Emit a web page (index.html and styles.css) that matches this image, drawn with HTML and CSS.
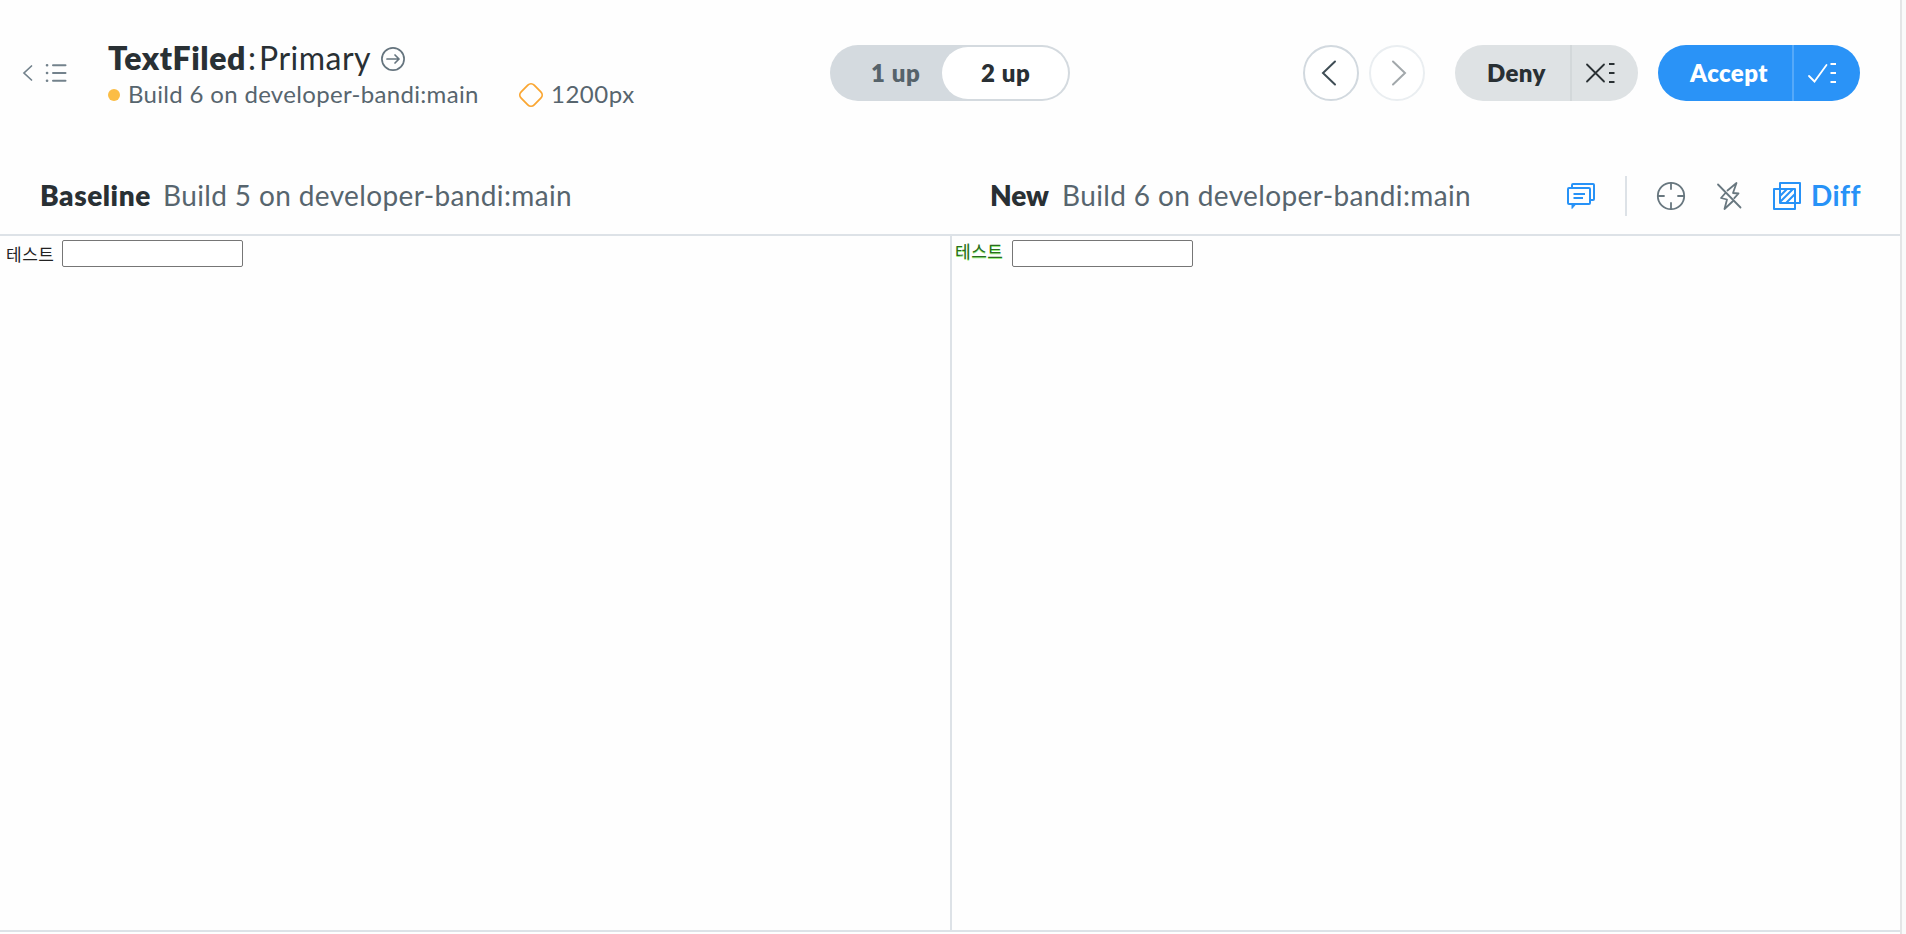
FILE: index.html
```
<!DOCTYPE html>
<html lang="en">
<head>
<meta charset="utf-8">
<title>TextFiled: Primary</title>
<link rel="stylesheet" href="styles.css">
</head>
<body>
<main class="app">
  <header class="topbar">
    <a class="back">
      <svg width="46" height="22" viewBox="0 0 46 22" fill="none" stroke="#73828c" stroke-width="1.7" stroke-linecap="round"><path d="M9.5 4 2 11l7.500 7"/><path d="M31 3.200h12.500M31 11h12.500M31 18.700h12.500" stroke-width="2"/><path d="M25 3.200h.1M25 11h.1M25 18.700h.1" stroke-width="2.600"/></svg>
    </a>
    <div class="heading">
      <h1 class="title"><b class="component">TextFiled</b><span class="colon">:</span><span class="story">Primary</span>
        <svg class="go" width="24" height="24" viewBox="0 0 24 24" fill="none" stroke="#65747e" stroke-width="1.700" stroke-linecap="round" stroke-linejoin="round"><circle cx="12" cy="12" r="11.100"/><path d="M6 12h12M14 8l4 4-4 4"/></svg>
      </h1>
      <div class="meta">
        <i class="dot"></i><span class="build">Build 6 on developer-bandi:main</span>
        <svg class="diamond" width="26" height="26" viewBox="0 0 26 26" fill="none" stroke="#faa632" stroke-width="1.800"><rect x="3.800" y="3.800" width="18.400" height="18.400" rx="4.500" transform="rotate(45 13 13)"/></svg>
        <span class="viewport">1200px</span>
      </div>
    </div>
    <div class="switch"><span class="option one">1 up</span><span class="option two">2 up</span></div>
    <nav class="actions">
      <button class="round"><svg width="16" height="28" viewBox="0 0 16 28" fill="none" stroke="#3f4d55" stroke-width="2" stroke-linecap="round"><path d="M14 2.500 2 14l12 11.500"/></svg></button>
      <button class="round disabled"><svg width="16" height="28" viewBox="0 0 16 28" fill="none" stroke="#a2a8ab" stroke-width="2" stroke-linecap="round"><path d="m2 2.500 12 11.500L2 25.500"/></svg></button>
      <div class="split deny"><span class="action">Deny</span><span class="batch"><svg width="30" height="24" viewBox="0 0 30 24" fill="none" stroke="#2a3134" stroke-width="2"><path d="m2 3.500 17 17M19 3.500l-17 17" stroke-width="1.800" stroke-linecap="round"/><path d="M24 3h5.500M24 12h5.500M24 21h5.500"/></svg></span></div>
      <div class="split accept"><span class="action">Accept</span><span class="batch"><svg width="30" height="24" viewBox="0 0 30 24" fill="none" stroke="#fff" stroke-width="2"><path d="m2 15 5.500 5.500L19.500 4" stroke-width="1.800" stroke-linecap="round"/><path d="M23.500 3h5.500M23.500 12h5.500M23.500 21h5.500"/></svg></span></div>
    </nav>
  </header>
  <section class="compare">
    <div class="pane">
      <div class="pane-head"><b class="label baseline">Baseline</b><span class="ref">Build 5 on developer-bandi:main</span></div>
      <div class="snapshot"><label class="field">테스트</label><input class="input" aria-label="테스트"></div>
    </div>
    <div class="pane fresh">
      <div class="pane-head"><b class="label new">New</b><span class="ref">Build 6 on developer-bandi:main</span>
        <div class="tools">
          <svg class="comments" width="30" height="28" viewBox="0 0 30 28" fill="none" stroke="#2792f7" stroke-width="2" stroke-linejoin="round"><rect x="2" y="6" width="22" height="16" rx="1"/><path d="M6 6V3a1 1 0 0 1 1-1h20a1 1 0 0 1 1 1v14a1 1 0 0 1-1 1h-3M7.500 12H19M7.500 16H17"/><path d="M6 22v4.500l4-4.500Z" fill="#2792f7" stroke-width="1"/></svg>
          <i class="rule"></i>
          <svg class="target" width="30" height="30" viewBox="0 0 30 30" fill="none" stroke="#68777f" stroke-width="1.800" stroke-linecap="round"><circle cx="15" cy="15" r="13.200"/><path d="M15 2v6M15 22v6M2 15h6M22 15h6"/></svg>
          <svg class="flash" width="26" height="30" viewBox="0 0 26 30" fill="none" stroke="#68777f" stroke-width="1.800" stroke-linecap="round" stroke-linejoin="round"><path d="m2 3.500 22.500 23M11.500 9.500 20.500 2l-3.500 10 5.500.5-4.200 4.700M16.500 20.500 8.500 28l2.500-9.500-6-1.500 4-4.500"/></svg>
          <svg class="overlay" width="30" height="30" viewBox="0 0 30 30" fill="none" stroke="#2792f7" stroke-width="2" stroke-linejoin="round"><rect x="2" y="8" width="21" height="20"/><rect x="8" y="2" width="20" height="20"/><path d="m8 15 7-7M8 21 21 8M14 22l9-9"/></svg>
          <b class="diff">Diff</b>
        </div>
      </div>
      <div class="snapshot"><label class="field changed">테스트</label><input class="input" aria-label="테스트"></div>
    </div>
  </section>
</main>
</body>
</html>
```
FILE: styles.css
```
* { box-sizing: border-box; }
body { margin: 0; height: 934px; overflow: hidden; background: #fafafa; color: #293034; font-family: Lato, "Noto Sans CJK KR", sans-serif; font-size: 24px; }
svg { flex: none; display: block; }
button { font: inherit; padding: 0; }
b { font-weight: 800; }
.app { width: 1902px; height: 934px; border-right: 2px solid #e4e5e6; background: #fefefe; }
.topbar { display: flex; height: 156px; }
.back { width: 108px; padding: 62px 0 0 22px; }
.heading { width: 722px; padding-top: 38px; }
.title { display: flex; align-items: center; margin: 0; height: 40px; font-size: 32px; font-weight: 400; line-height: 40px; }
.component { width: 140px; letter-spacing: .55px; white-space: nowrap; }
.colon { width: 11px; }
.story { width: 122px; letter-spacing: .5px; }
.go { margin-top: 2px; }
.meta { display: flex; align-items: center; height: 34px; color: #57656e; line-height: 34px; white-space: nowrap; }
.dot { width: 12px; height: 12px; margin-right: 8px; border-radius: 50%; background: #fbbd45; }
.build { width: 390px; margin-top: -2px; letter-spacing: .32px; }
.viewport { margin-top: -2px; padding-left: 7px; letter-spacing: .5px; }
.switch { display: flex; width: 240px; height: 56px; margin-top: 45px; padding: 2px; border-radius: 28px; background: #d4dadf; font-weight: 800; line-height: 51px; }
.option { width: 110px; padding-left: 39px; color: #56636b; letter-spacing: .6px; white-space: nowrap; }
.two { width: 126px; border-radius: 26px; background: #fff; color: #293034; }
.actions { display: flex; margin: 45px 0 0 233px; height: 56px; }
.round { display: flex; align-items: center; justify-content: center; width: 56px; height: 56px; margin-right: 10px; padding-right: 4px; border: 2px solid #d2d9df; border-radius: 50%; background: #fff; }
.disabled { margin-right: 30px; padding: 0 0 0 4px; border-color: #eaeef1; }
.split { display: flex; overflow: hidden; height: 56px; border-radius: 28px; font-weight: 800; line-height: 55px; }
.action { padding-left: 32px; border-right: 2px solid #d3d8da; letter-spacing: .4px; white-space: nowrap; }
.batch { padding: 16px 0 0 13px; }
.deny { width: 183px; margin-right: 20px; background: #dee2e4; }
.deny .action { width: 117px; }
.accept { width: 202px; background: #2a93f7; color: #fff; }
.accept .action { width: 136px; border-color: #55a9f9; }
.compare { display: flex; height: 776px; border-bottom: 2px solid #dde2e7; }
.pane { width: 950px; }
.pane-head { display: flex; align-items: center; height: 80px; padding: 0 40px; border-bottom: 2px solid #dde2e7; font-size: 28px; white-space: nowrap; }
.label { letter-spacing: .55px; }
.baseline { width: 123px; }
.new { width: 72px; letter-spacing: -.1px; }
.ref { color: #57656e; letter-spacing: .37px; }
.snapshot { display: flex; height: 694px; padding: 4px 0 0 6px; font-size: 17px; line-height: 27px; }
.fresh .snapshot { border-left: 2px solid #dde2e7; padding-left: 3px; }
.field { width: 56px; color: #222; font-family: "Noto Sans CJK KR", sans-serif; letter-spacing: .5px; }
.changed { width: 57px; margin-top: -3px; color: #2a6a20; text-shadow: 0 1px 0 #96f07b; }
.input { width: 181px; height: 27px; border: 1px solid #767676; border-radius: 2px; background: #fff; }
.tools { display: flex; align-items: center; margin: 2px 0 0 auto; color: #2792f7; }
.comments { margin-right: 29px; }
.rule { width: 2px; height: 40px; margin-right: 29px; background: #dde2e7; }
.target { margin-right: 30px; }
.flash { margin-right: 30px; }
.overlay { margin-right: 9px; }
.diff { width: 49px; margin-top: -2px; font-weight: 700; letter-spacing: .4px; }
```
